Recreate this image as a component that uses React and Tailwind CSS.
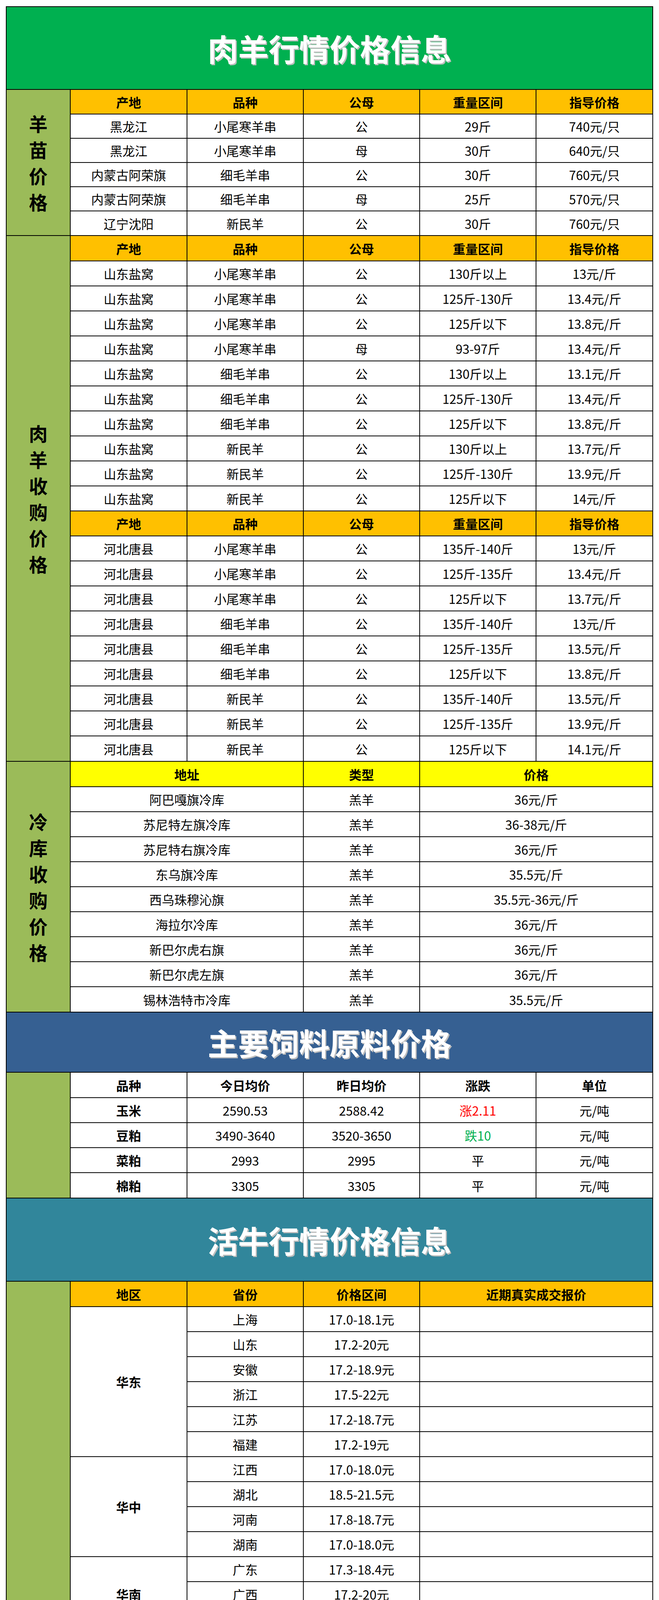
import React from 'react';

const seedlings = [
  ['黑龙江', '小尾寒羊串', '公', '29斤', '740元/只'],
  ['黑龙江', '小尾寒羊串', '母', '30斤', '640元/只'],
  ['内蒙古阿荣旗', '细毛羊串', '公', '30斤', '760元/只'],
  ['内蒙古阿荣旗', '细毛羊串', '母', '25斤', '570元/只'],
  ['辽宁沈阳', '新民羊', '公', '30斤', '760元/只'],
];

const shandong = [
  ['山东盐窝', '小尾寒羊串', '公', '130斤以上', '13元/斤'],
  ['山东盐窝', '小尾寒羊串', '公', '125斤-130斤', '13.4元/斤'],
  ['山东盐窝', '小尾寒羊串', '公', '125斤以下', '13.8元/斤'],
  ['山东盐窝', '小尾寒羊串', '母', '93-97斤', '13.4元/斤'],
  ['山东盐窝', '细毛羊串', '公', '130斤以上', '13.1元/斤'],
  ['山东盐窝', '细毛羊串', '公', '125斤-130斤', '13.4元/斤'],
  ['山东盐窝', '细毛羊串', '公', '125斤以下', '13.8元/斤'],
  ['山东盐窝', '新民羊', '公', '130斤以上', '13.7元/斤'],
  ['山东盐窝', '新民羊', '公', '125斤-130斤', '13.9元/斤'],
  ['山东盐窝', '新民羊', '公', '125斤以下', '14元/斤'],
];

const hebei = [
  ['河北唐县', '小尾寒羊串', '公', '135斤-140斤', '13元/斤'],
  ['河北唐县', '小尾寒羊串', '公', '125斤-135斤', '13.4元/斤'],
  ['河北唐县', '小尾寒羊串', '公', '125斤以下', '13.7元/斤'],
  ['河北唐县', '细毛羊串', '公', '135斤-140斤', '13元/斤'],
  ['河北唐县', '细毛羊串', '公', '125斤-135斤', '13.5元/斤'],
  ['河北唐县', '细毛羊串', '公', '125斤以下', '13.8元/斤'],
  ['河北唐县', '新民羊', '公', '135斤-140斤', '13.5元/斤'],
  ['河北唐县', '新民羊', '公', '125斤-135斤', '13.9元/斤'],
  ['河北唐县', '新民羊', '公', '125斤以下', '14.1元/斤'],
];

const coldStores = [
  ['阿巴嘎旗冷库', '羔羊', '36元/斤'],
  ['苏尼特左旗冷库', '羔羊', '36-38元/斤'],
  ['苏尼特右旗冷库', '羔羊', '36元/斤'],
  ['东乌旗冷库', '羔羊', '35.5元/斤'],
  ['西乌珠穆沁旗', '羔羊', '35.5元-36元/斤'],
  ['海拉尔冷库', '羔羊', '36元/斤'],
  ['新巴尔虎右旗', '羔羊', '36元/斤'],
  ['新巴尔虎左旗', '羔羊', '36元/斤'],
  ['锡林浩特市冷库', '羔羊', '35.5元/斤'],
];

const feeds = [
  ['玉米', '2590.53', '2588.42', '涨2.11', 'text-[#ff0000]'],
  ['豆粕', '3490-3640', '3520-3650', '跌10', 'text-[#00b050]'],
  ['菜粕', '2993', '2995', '平', ''],
  ['棉粕', '3305', '3305', '平', ''],
];

const cattle = [
  {
    region: ['华东'],
    rows: [
      ['上海', '17.0-18.1元', ''],
      ['山东', '17.2-20元', ''],
      ['安徽', '17.2-18.9元', ''],
      ['浙江', '17.5-22元', ''],
      ['江苏', '17.2-18.7元', ''],
      ['福建', '17.2-19元', ''],
    ],
  },
  {
    region: ['华中'],
    rows: [
      ['江西', '17.0-18.0元', ''],
      ['湖北', '18.5-21.5元', ''],
      ['河南', '17.8-18.7元', ''],
      ['湖南', '17.0-18.0元', ''],
    ],
  },
  {
    region: ['华南'],
    rows: [
      ['广东', '17.3-18.4元', ''],
      ['广西', '17.2-20元', ''],
      ['海南', '18.2-19元', ''],
    ],
  },
  {
    region: ['华北'],
    rows: [
      ['北京', '17.0-17.8元', '北京刚卖8头一千五六百斤的，18一斤'],
      ['天津', '17.0-17.8元', '天津武清装车黄白花21头18.7元'],
      ['山西', '16.9-18.6元', '山西省文水县出栏肉牛17.3元'],
      ['河北', '17.0-18.8元', '河北邢台：六百五十斤西门小母牛18000'],
      ['内蒙', '16.8-18.7元', '内蒙赤峰：500斤左右的小公牛卖了14800'],
    ],
  },
  {
    region: ['东北', '西北'],
    rows: [
      ['黑龙江', '16.9-18.7元', '黑龙江大庆安格斯肥母牛17.5元'],
      ['吉林', '17.0-18.8元', ['12头紫红花母牛有2头带两个月小牛犊，', '7头带肚，3头空怀，35万成交']],
      ['陕西', '16.9-18.7元', '500斤架子牛1.3万！肥牛17'],
      ['甘肃', '16.9-18.6元', ''],
      ['宁夏', '16.9-18.6元', ''],
      ['新疆', '16.8-17.8元', ''],
    ],
  },
  {
    region: ['西南'],
    rows: [
      ['重庆', '17.2-19.8元', '重庆大肉牛17.6一斤'],
      ['四川', '17.3-20元', '四川内江一千二左右均价18.5'],
      ['云南', '17.2-19元', '云南腾冲小公牛350斤10060'],
      ['贵州', '17.2-19.2元', ''],
    ],
  },
];

const td = 'border-2 border-black text-center align-middle whitespace-nowrap p-0';

const Title = ({ text, bg, h }) => (
  <div className={`flex items-center justify-center border-b-2 border-black ${bg} ${h}`}>
    <span className="text-[78px] font-bold text-white leading-none [text-shadow:3px_3px_0_#bdbdbd]">
      {text}
    </span>
  </div>
);

// one block: green label column on the left, a 5-column table on the right
const Section = ({ label, last, children }) => (
  <div className={`flex ${last ? '' : 'border-b-2 border-black'}`}>
    <div className="w-[164px] shrink-0 border-r-2 border-black bg-[#9bbb59] flex items-center justify-center">
      {label && (
        <div className="flex flex-col items-center text-[48px] font-bold leading-[67px]">
          {label.split('').map((c, i) => (
            <div key={i}>{c}</div>
          ))}
        </div>
      )}
    </div>
    <table className="flex-1 table-fixed border-collapse border-hidden">
      <colgroup>
        <col className="w-[298px]" />
        <col className="w-[298px]" />
        <col className="w-[298px]" />
        <col className="w-[298px]" />
        <col className="w-[298px]" />
      </colgroup>
      <tbody>{children}</tbody>
    </table>
  </div>
);

const sheepHead = (h) => (
  <tr className="bg-[#ffc000] font-bold">
    {['产地', '品种', '公母', '重量区间', '指导价格'].map((t) => (
      <td key={t} className={`${td} ${h}`}>{t}</td>
    ))}
  </tr>
);

const sheepRows = (rows, h) =>
  rows.map((r, i) => (
    <tr key={i}>
      {r.map((t, j) => (
        <td key={j} className={`${td} ${h}`}>{t}</td>
      ))}
    </tr>
  ));

export default function App() {
  return (
    <div className="bg-white pt-[16px] pl-[15px]">
      <div className="w-[1658px] border-2 border-black text-[32px] text-black font-['Noto_Sans_CJK_SC','Noto_Sans',sans-serif]">
        <Title text="肉羊行情价格信息" bg="bg-[#00b050]" h="h-[212px]" />

        <Section label="羊苗价格">
          {sheepHead('h-[62px]')}
          {sheepRows(seedlings, 'h-[62px]')}
        </Section>

        <Section label="肉羊收购价格">
          {sheepHead('h-[64px]')}
          {sheepRows(shandong, 'h-[64px]')}
          {sheepHead('h-[64px]')}
          {sheepRows(hebei, 'h-[64px]')}
        </Section>

        <Section label="冷库收购价格">
          <tr className="bg-[#ffff00] font-bold">
            <td colSpan={2} className={`${td} h-[64px]`}>地址</td>
            <td className={`${td} h-[64px]`}>类型</td>
            <td colSpan={2} className={`${td} h-[64px]`}>价格</td>
          </tr>
          {coldStores.map((r, i) => (
            <tr key={i}>
              <td colSpan={2} className={`${td} h-[64px]`}>{r[0]}</td>
              <td className={`${td} h-[64px]`}>{r[1]}</td>
              <td colSpan={2} className={`${td} h-[64px]`}>{r[2]}</td>
            </tr>
          ))}
        </Section>

        <Title text="主要饲料原料价格" bg="bg-[#366092]" h="h-[154px]" />

        <Section>
          <tr className="font-bold">
            {['品种', '今日均价', '昨日均价', '涨跌', '单位'].map((t) => (
              <td key={t} className={`${td} h-[64px]`}>{t}</td>
            ))}
          </tr>
          {feeds.map((r) => (
            <tr key={r[0]}>
              <td className={`${td} h-[64px] font-bold`}>{r[0]}</td>
              <td className={`${td} h-[64px]`}>{r[1]}</td>
              <td className={`${td} h-[64px]`}>{r[2]}</td>
              <td className={`${td} h-[64px] ${r[4]}`}>{r[3]}</td>
              <td className={`${td} h-[64px]`}>元/吨</td>
            </tr>
          ))}
        </Section>

        <Title text="活牛行情价格信息" bg="bg-[#31869b]" h="h-[213px]" />

        <Section last>
          <tr className="bg-[#ffc000] font-bold">
            <td className={`${td} h-[64px]`}>地区</td>
            <td className={`${td} h-[64px]`}>省份</td>
            <td className={`${td} h-[64px]`}>价格区间</td>
            <td colSpan={2} className={`${td} h-[64px]`}>近期真实成交报价</td>
          </tr>
          {cattle.map((g) =>
            g.rows.map((r, i) => {
              const tall = Array.isArray(r[2]);
              const h = tall ? 'h-[128px]' : 'h-[64px]';
              return (
                <tr key={g.region.join('') + i}>
                  {i === 0 && (
                    <td rowSpan={g.rows.length} className={`${td} font-bold leading-[48px]`}>
                      {g.region.map((t) => (
                        <div key={t}>{t}</div>
                      ))}
                    </td>
                  )}
                  <td className={`${td} ${h}`}>{r[0]}</td>
                  <td className={`${td} ${h}`}>{r[1]}</td>
                  <td colSpan={2} className={`${td} ${h} leading-[48px]`}>
                    {tall ? r[2].map((t) => <div key={t}>{t}</div>) : r[2]}
                  </td>
                </tr>
              );
            })
          )}
        </Section>
      </div>
    </div>
  );
}
